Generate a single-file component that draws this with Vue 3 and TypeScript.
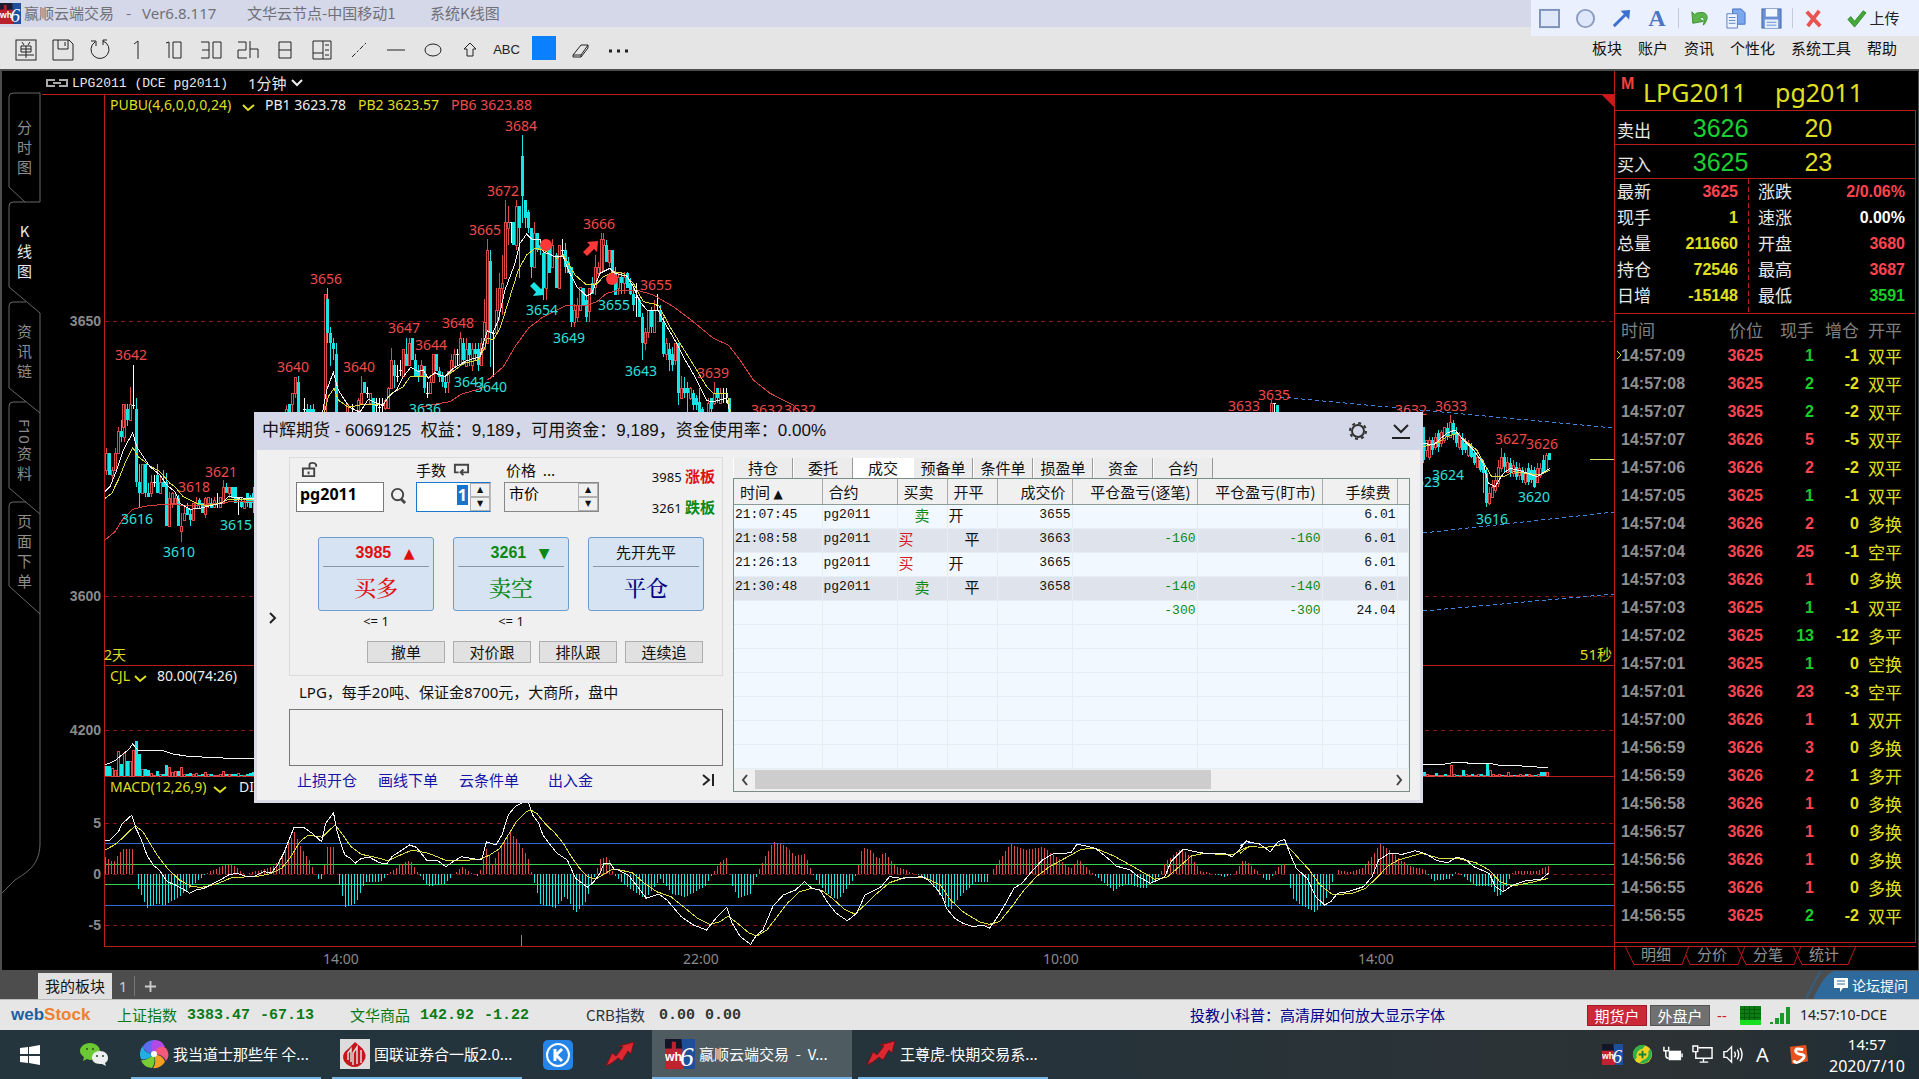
<script setup lang="ts">
type Kind = 'r' | 'c' | 'w'
interface Candle { x: number; high: number; top: number; bottom: number; low: number; kind: Kind }
interface Mark { x: number; y: number; text: string; tone: 'up' | 'down' }
interface Bar { x: number; h: number; kind: Kind }

// Each record: offset, high, body top, body bottom, low, kind. Offsets are thirds of a pixel.
function candles(x0: number, y0: number, src: string): Candle[] {
  return src.trim().split(';').filter(Boolean).map(rec => {
    const p = rec.trim().split(' ')
    const n = p.slice(0, 5).map(Number)
    const y = (v: number) => Math.round(y0 + v / 3)
    return { x: Math.round(x0 + n[0] / 3) - 1, high: y(n[1]), top: y(n[2]), bottom: y(n[3]), low: y(n[4]), kind: p[5] as Kind }
  })
}

// Turns "x,y x,y" samples into polyline points at an origin, with a given horizontal density.
function trace(x0: number, y0: number, density: number, src: string): string {
  return src.trim().split(/\s+/).map(pair => {
    const [x, y] = pair.split(',').map(Number)
    return `${Math.round((x0 + x / density) * 10) / 10},${Math.round((y0 + y / 3) * 10) / 10}`
  }).join(' ')
}

const bars: Candle[] = [
  ...candles(0, 340, `318 325 340 390 405 r;327 340 340 405 405 c;335 380 390 405 425 r;344 325 340 390 390 r;353 260 272 340 340 r;362 240 272 290 305 c;371 192 192 290 305 r;380 192 207 240 258 c;389 140 192 240 240 r;398 75 195 195 207 w;407 175 207 425 440 c;416 372 425 458 500 c;425 372 372 458 458 r;434 372 372 458 470 c;443 430 458 472 472 c;452 405 425 458 470 r;461 405 425 425 440 w;470 372 405 458 458 c;479 405 425 458 458 r;488 390 425 440 440 c;497 400 425 557 557 c;506 455 475 557 557 r;515 455 458 490 505 r;524 460 475 490 490 r;533 465 475 557 557 c;542 520 557 572 605 r;551 500 520 540 540 r;560 490 505 525 525 c;569 510 522 540 557 c;578 490 490 540 540 r;587 470 490 505 505 r;596 475 480 495 505 c;605 490 490 520 520 c;614 472 475 522 535 r;623 472 472 490 505 r;632 475 490 505 505 c;641 470 480 500 500 r;650 458 490 490 505 w;659 472 472 500 505 r;668 420 440 490 490 r;677 430 440 458 458 c;686 440 440 458 475 r;695 440 440 475 475 c;704 440 440 490 490 c;713 470 475 475 525 w;722 472 485 500 505 c;731 475 485 505 505 r;740 458 458 490 500 c;749 465 472 505 505 c;758 440 460 490 520 c`),
  ...candles(90, 120, `99 853 853 920 920 r;587 855 868 890 890 r;596 853 853 890 890 c;605 820 820 853 890 r;614 770 770 820 835 r;623 768 787 890 890 c;641 835 868 868 890 w;650 853 868 890 890 c;659 855 868 890 890 c;668 853 868 890 890 c;704 523 523 890 890 r;712 505 538 640 670 c;721 622 640 670 738 c;730 655 670 688 720 c;739 670 703 890 890 c;770 850 853 890 890 r;785 853 865 865 880 w;803 835 840 870 890 r;812 768 820 850 850 r;821 787 787 820 820 c;830 800 820 820 835 w;839 820 820 850 855 r;848 835 835 890 890 c;857 835 855 855 880 w;866 835 860 860 880 w;875 835 855 855 880 w;884 835 840 865 870 r;893 800 803 865 868 r;902 685 720 803 803 r;911 720 735 768 803 c;920 735 768 768 785 w;929 720 750 750 768 w;938 688 688 768 768 r;947 655 703 738 738 c;956 655 670 735 735 r;965 655 655 720 720 c;974 703 720 768 768 c;983 735 750 770 785 c;992 720 735 765 765 r;1001 738 738 803 820 c;1010 787 820 820 835 w;1019 768 787 820 820 r;1028 703 703 787 787 r;1037 703 703 753 753 c;1046 740 753 770 785 c;1055 755 765 787 800 c;1064 770 787 803 820 c;1073 753 753 787 820 r;1082 703 720 753 753 r;1091 688 703 738 738 r;1100 688 703 703 735 w;1109 635 655 735 735 r;1118 655 670 720 735 c;1127 655 688 738 738 r;1136 670 670 705 738 c;1145 670 688 735 753 r;1154 670 688 703 720 c;1163 670 688 735 753 c;1172 655 670 735 735 r;1181 538 605 688 688 r;1190 357 390 670 670 r;1199 390 423 640 740 c`),
  ...candles(440, 120, `158 635 640 640 770 w;167 505 570 635 635 r;176 458 505 570 600 r;185 405 490 505 585 r;194 240 307 475 475 r;203 258 307 325 375 r;212 307 307 307 370 w;220 307 307 375 375 c;229 240 258 375 390 r;238 258 258 325 475 c;247 45 108 227 310 c;256 240 240 293 325 c;265 270 275 325 340 c;274 325 325 440 475 c;283 307 340 440 440 r;292 340 340 390 395 c;301 360 375 390 405 c;310 390 400 505 540 c;319 390 390 505 540 r;328 375 375 458 458 c;337 357 375 440 440 r;347 400 405 505 505 c;356 375 375 505 505 r;365 357 390 390 405 w;374 370 390 440 460 c;383 410 425 458 458 c;392 440 440 605 622 c;401 552 570 605 622 r;410 535 555 590 605 r;419 500 500 570 570 r;428 505 505 555 555 c;437 530 540 590 605 c;446 505 505 572 605 r;455 470 490 522 522 c;464 405 440 500 525 r;473 425 440 460 470 r;482 340 357 455 455 r;490 340 357 375 455 r;499 360 375 425 425 c;508 390 390 425 440 r;517 390 390 455 490 c;526 440 455 525 525 c;535 460 470 505 525 r;544 455 470 490 522 c;553 455 470 490 522 r;562 455 460 505 505 c;571 475 490 522 525 c;580 500 522 555 572 c;589 490 530 530 590 w;598 535 540 590 590 c;607 580 590 670 720 c;616 625 635 670 690 r;625 570 570 635 655 r;634 560 570 622 640 c;643 540 570 635 640 r;652 522 555 555 572 w;661 555 570 605 605 c;670 590 605 703 710 c;679 655 670 703 720 r;688 670 688 720 753 c;697 680 703 735 753 c;706 670 670 720 735 r;715 670 670 820 855 c;724 768 805 835 835 r;733 770 803 820 835 c;742 785 803 820 880 c;751 800 803 835 840 r;760 810 820 855 870 c;769 825 835 855 870 c;778 803 845 890 890 c;787 860 868 890 890 c;805 835 850 890 890 r;814 835 835 868 880 c;823 787 820 850 855 r;832 803 803 835 850 c;841 805 820 850 850 r;850 803 820 820 850 w;859 803 820 820 850 w;868 835 835 890 890 c`),
  ...candles(1240, 340, `93 180 190 225 225 r;102 190 190 225 225 w;111 195 195 225 225 c;550 260 260 360 370 c;559 300 300 330 350 r;568 290 300 350 360 r;577 290 300 330 345 c;586 280 290 320 330 r;595 270 280 320 335 c;604 270 275 310 320 r;613 260 260 300 310 r;622 250 265 290 300 c;631 225 245 290 290 r;640 240 250 285 300 c;649 260 275 310 320 c;658 275 285 320 330 r;667 280 300 330 345 c;676 295 310 330 340 c;685 300 315 345 350 r;694 310 320 350 355 c;703 330 340 370 375 c;712 340 350 380 385 r;721 350 360 390 395 c;730 360 370 400 460 c;739 380 400 490 500 c;748 440 460 490 495 r;757 420 440 470 475 r;766 400 420 450 460 r;775 360 380 430 440 r;784 325 350 385 395 r;793 340 350 380 400 c;802 350 365 395 400 r;811 355 370 395 410 c;820 360 375 400 410 r;829 365 380 410 420 c;838 370 385 405 420 r;847 380 390 420 430 c;856 385 395 425 435 r;865 370 385 425 435 c;874 375 390 420 430 c;883 380 390 440 445 c;892 370 385 425 430 r;901 370 385 405 415 r;910 345 360 395 400 c;919 340 345 390 390 r;928 340 340 360 360 c`)
]

const whiteLines = [
  trace(0, 340, 3, '315,455 330,440 350,390 370,330 398,278 410,320 430,350 450,380 480,405 500,435 525,455 540,490 570,508 600,505 640,495 665,490 685,470 740,475 762,475'),
  trace(90, 120, 3, '695,890 710,810 730,757 745,810 770,850 785,866 810,876 835,838 860,850 880,855 895,830 920,810 940,770 962,742 985,755 1000,750 1015,775 1035,758 1050,765 1065,770 1090,745 1130,722 1170,710 1180,670 1192,632'),
  trace(440, 120, 3, '142,632 158,640 175,600 195,510 225,430 240,370 260,342 275,358 300,358 310,395 345,410 370,410 385,450 410,500 440,528 455,520 480,460 510,445 525,460 560,468 580,500 600,545 620,570 655,572 675,610 710,670 730,710 770,780 800,842 820,845 860,835 872,890'),
  trace(1240, 340, 3, '550,310 580,315 620,280 645,270 670,300 700,330 730,370 745,430 765,440 790,400 810,385 850,395 890,410 930,385'),
  trace(0, 760, 2.45, '257,242 270,240 290,215 300,190 310,180 323,165 333,205 345,235 360,285 375,315 390,330 410,365 430,375 445,385 465,400 480,390 500,385 520,372 540,360 560,345 580,340 600,348 625,348 645,335 665,338 680,315 695,280 708,240 720,203 745,203 765,220 788,245 798,190 817,158 825,210 835,250 845,285 858,295 870,310 885,295 905,292 930,308 948,312 960,290 985,270 1003,255 1020,262 1045,300 1070,300 1092,320 1110,305 1130,290 1180,300 1192,245 1215,255 1230,225 1245,165 1262,140 1280,128 1295,128 1305,165 1320,190 1330,225 1345,250 1365,280 1390,300 1410,355 1440,382 1455,365 1470,340 1480,310 1495,310 1505,328 1519,331'),
  trace(620, 780, 2.45, '0,273 20,285 40,315 65,355 95,342 115,360 150,410 180,435 212,450 235,415 262,382 275,430 295,470 320,493 335,465 350,450 375,378 400,345 430,330 452,305 470,325 490,330 510,370 530,400 557,422 580,400 600,345 640,320 660,290 690,295 740,290 755,300 775,325 790,350 800,385 820,415 840,430 865,440 890,435 905,445 925,410 945,370 965,325 985,310 1005,280 1035,240 1060,222 1105,218 1120,192 1165,205 1200,240 1215,258 1250,270 1270,290 1300,310 1335,290 1350,245 1380,207 1410,215 1440,222 1480,220 1500,230 1515,212 1535,183 1555,190'),
  trace(1240, 640, 2.309, '0,618 15,605 45,612 70,635 88,605 103,598 115,640 130,685 155,715 175,770 195,795 210,785 225,760 250,755 285,740 305,710 320,660 345,640 375,643 405,632 430,642 455,662 480,668 500,652 520,658 540,680 575,700 590,740 608,755 630,735 660,722 695,718 712,700'),
  trace(0, 340, 3, '315,1275 345,1262 365,1245 385,1230 398,1212 415,1232 490,1232 520,1242 570,1250 640,1252 700,1256 762,1256'),
  trace(1240, 640, 2.309, '423,373 470,373 490,368 510,366 530,370 575,370 600,376 650,378 712,383')
]
const yellowLines = [
  trace(0, 340, 3, '315,475 335,460 355,420 375,370 398,322 415,350 450,378 480,395 510,430 525,440 550,470 590,490 620,497 660,490 685,478 762,480'),
  trace(90, 120, 3, '700,890 715,830 732,805 745,840 775,862 810,855 880,852 905,820 940,800 960,770 1000,768 1015,772 1035,760 1065,770 1095,750 1120,730 1165,720 1185,680 1192,655'),
  trace(440, 120, 3, '142,655 160,660 180,625 210,530 235,450 260,405 285,385 310,390 330,402 350,415 370,405 385,430 405,465 440,495 470,492 490,470 520,455 550,460 580,490 610,545 655,555 690,620 720,670 770,750 800,800 820,820 862,822 874,890'),
  trace(1240, 340, 3, '550,320 590,310 620,290 650,280 680,305 710,330 735,375 755,410 790,410 820,395 860,400 900,405 930,390'),
  trace(0, 760, 2.45, '257,270 280,255 300,235 315,215 332,198 350,215 365,245 385,285 410,325 440,360 470,380 495,382 530,372 570,352 625,350 660,342 690,325 710,295 735,245 755,225 790,232 805,212 822,195 840,225 860,260 885,283 920,292 950,302 985,283 1010,270 1050,280 1090,300 1120,303 1175,298 1200,285 1225,265 1245,225 1265,185 1290,155 1300,150 1315,160 1335,190 1360,220 1380,250 1400,290 1420,325 1440,350 1460,357 1480,342 1500,328 1519,330'),
  trace(620, 780, 2.45, '0,270 30,278 60,310 90,335 125,350 160,385 190,415 220,433 245,425 265,408 290,432 315,458 335,468 360,450 385,410 410,370 440,335 470,325 495,332 520,355 550,388 575,402 600,375 625,345 660,308 700,292 745,292 785,315 810,360 840,395 880,425 905,433 930,425 960,380 990,330 1020,290 1050,262 1090,235 1130,208 1165,205 1210,228 1260,262 1310,298 1340,292 1370,260 1400,228 1430,220 1500,225 1530,205 1550,198'),
  trace(1240, 640, 2.309, '0,640 20,620 60,622 105,612 125,640 160,690 185,735 215,765 260,760 290,745 315,715 340,680 365,660 420,640 460,655 500,655 545,668 575,690 600,725 630,738 680,725 712,715')
]
const redLines = [
  trace(0, 340, 3, '315,600 345,575 370,535 398,508 440,498 500,492 560,497 620,494 690,485 762,483'),
  trace(90, 120, 3, '990,862 1050,850 1080,845 1115,822 1150,812 1190,800'),
  trace(440, 120, 3, '140,780 150,775 190,740 225,680 265,625 310,590 340,575 380,555 440,555 470,545 500,520 530,512 590,510 640,525 700,560 760,605 820,655 865,675 900,720 940,780 990,820 1060,855 1080,876')
]

const marks: Mark[] = [
  ...([[521, 126, 3684], [503, 191, 3672], [485, 230, 3665], [326, 279, 3656], [131, 355, 3642], [404, 328, 3647], [458, 323, 3648], [431, 345, 3644], [599, 224, 3666], [656, 285, 3655], [713, 373, 3639], [293, 367, 3640], [359, 367, 3640], [767, 410, 3632], [800, 410, 3632], [194, 487, 3618], [221, 472, 3621], [1244, 406, 3633], [1274, 395, 3635], [1411, 410, 3632], [1451, 406, 3633], [1511, 439, 3627], [1542, 444, 3626]] as number[][])
    .map(([x, y, v]): Mark => ({ x, y, text: String(v), tone: 'up' })),
  ...([[542, 310, 3654], [614, 305, 3655], [569, 338, 3649], [641, 371, 3643], [470, 382, 3641], [491, 387, 3640], [425, 409, 3636], [137, 519, 3616], [236, 525, 3615], [179, 552, 3610], [1424, 482, 3623], [1448, 475, 3624], [1534, 497, 3620], [1492, 519, 3616]] as number[][])
    .map(([x, y, v]): Mark => ({ x, y, text: String(v), tone: 'down' }))
]

const momentum: [number, number][] = [[105, 17], [113, 12], [122, 25], [132, 25], [135, 0], [138, -15], [147, -34], [155, -30], [165, -31], [180, -22], [196, -8], [205, 0], [215, 5], [225, 9], [232, 9], [245, 0], [260, 4], [275, 9], [285, 25], [294, 42], [300, 28], [310, 12], [315, 0], [320, -8], [323, 0], [326, 27], [333, 27], [336, 0], [345, -33], [355, -30], [365, -8], [380, -8], [388, 0], [398, 8], [410, 14], [418, 0], [428, -12], [445, -10], [453, 0], [462, 7], [478, -3], [486, 25], [492, 10], [502, 30], [510, 42], [520, 30], [528, 15], [532, -2], [540, -30], [555, -34], [565, -22], [575, -39], [585, -28], [595, 0], [600, 15], [608, 17], [613, 0], [625, -12], [645, -25], [660, -5], [672, -20], [685, -23], [705, -12], [712, 0], [720, 12], [727, 17], [730, -8], [738, -24], [750, -20], [757, 0], [765, 18], [773, 32], [785, 28], [795, 18], [805, 20], [812, 0], [825, -18], [838, -26], [850, -10], [856, 0], [862, 27], [870, 24], [878, 15], [884, 22], [895, 8], [915, 0], [925, -3], [935, -15], [950, -36], [960, -22], [975, -8], [988, -8], [990, 0], [998, 12], [1010, 30], [1025, 24], [1042, 27], [1055, 18], [1070, 5], [1078, 15], [1090, 3], [1095, -2], [1113, -17], [1125, -10], [1145, -15], [1158, -3], [1165, 12], [1180, 25], [1190, 18], [1200, 3], [1225, -3], [1234, 0], [1243, 15], [1258, 2], [1265, -6], [1270, -6], [1275, 3], [1281, 10], [1285, 10], [1287, 0], [1292, -24], [1302, -32], [1315, -38], [1325, -27], [1333, -5], [1337, 4], [1350, 2], [1362, 6], [1370, 15], [1380, 30], [1388, 25], [1400, 14], [1410, 8], [1425, 4], [1432, -7], [1450, -5], [1455, 2], [1460, 0], [1475, -12], [1490, -12], [1498, -24], [1505, -14], [1513, 3], [1535, 3], [1549, 8]]
const histogram: Bar[] = []
for (let x = 105, k = 0; x <= 1549; x += 3) {
  while (k < momentum.length - 2 && momentum[k + 1][0] < x) k++
  const [xa, va] = momentum[k]
  const [xb, vb] = momentum[k + 1]
  const v = Math.round(va + ((vb - va) * (x - xa)) / (xb - xa))
  histogram.push({ x, h: Math.abs(v), kind: v >= 0 ? 'r' : 'c' })
}

const volume = (x0: number, src: string): Bar[] => src.split(' ').map((s, i) => ({ x: x0 + i * 3, h: parseInt(s), kind: s.slice(-1) as Kind }))
const volumes: Bar[] = [
  ...volume(105, '10c 10c 8r 6r 25r 12c 23r 15c 15r 26r 35c 22c 7r 7c 6c 3r 1r 5c 2r 2c 11c 9r 4r 5r 5c 9r 2r 2c 3c 2r 3r 1c 2c 4r 2r 2c 1r 1r 2r 5r 2c 2r 2c 2c 3r 1c 1r 2c 3c 4c'),
  ...volume(1423, '4c 2r 1r 1r 3c 1r 1r 2c 1r 11r 2r 1c 1r 6c 2r 1r 2c 1r 2r 2c 1r 12c 6r 2r 1r 2r 1c 1r 4r 1r 1c 1r 2r 1r 2c 2r 1r 1c 2r 4c 4c 4r')
]

interface Deal { time: string; side: string; oc: string; price: string; pl: string; fee: string }
const deals: Deal[] = [
  { time: '21:07:45', side: '卖', oc: '开', price: '3655', pl: '', fee: '6.01' },
  { time: '21:08:58', side: '买', oc: '平', price: '3663', pl: '-160', fee: '6.01' },
  { time: '21:26:13', side: '买', oc: '开', price: '3665', pl: '', fee: '6.01' },
  { time: '21:30:48', side: '卖', oc: '平', price: '3658', pl: '-140', fee: '6.01' }
]
const dealTabs = ['持仓', '委托', '成交', '预备单', '条件单', '损盈单', '资金', '合约']

const ticks = `14:57:09 3625 g1 -1 双平|14:57:08 3625 g2 -2 双平|14:57:07 3625 g2 -2 双平|14:57:07 3626 r5 -5 双平|14:57:06 3626 r2 -2 双平|14:57:05 3625 g1 -1 双平|14:57:04 3626 r2 0 多换|14:57:04 3626 r25 -1 空平|14:57:03 3626 r1 0 多换|14:57:03 3625 g1 -1 双平|14:57:02 3625 g13 -12 多平|14:57:01 3625 g1 0 空换|14:57:01 3626 r23 -3 空平|14:57:00 3626 r1 1 双开|14:56:59 3626 r3 0 多换|14:56:59 3626 r2 1 多开|14:56:58 3626 r1 0 多换|14:56:57 3626 r1 0 多换|14:56:56 3626 r1 0 多换|14:56:55 3626 r1 0 多换|14:56:55 3625 g2 -2 双平`
  .split('|').map(line => {
    const [time, price, lots, delta, kind] = line.split(' ')
    return { time, price, up: lots[0] === 'r', lots: lots.slice(1), delta, kind }
  })

const quotes = [
  ['最新', '3625', 'red', '涨跌', '2/0.06%', 'red'],
  ['现手', '1', 'yellow', '速涨', '0.00%', 'white'],
  ['总量', '211660', 'yellow', '开盘', '3680', 'red'],
  ['持仓', '72546', 'yellow', '最高', '3687', 'red'],
  ['日增', '-15148', 'yellow', '最低', '3591', 'green']
]
const menus = ['板块', '账户', '资讯', '个性化', '系统工具', '帮助']
const sideTabs = [['分', '时', '图'], ['K', '线', '图'], ['资', '讯', '链'], ['F10', '资', '料'], ['页', '面', '下', '单']]
</script>

<template>
  <div class="app">
    <header class="titlebar">
      <svg class="wh-small" viewBox="0 0 22 22"><rect width="22" height="22" fill="#1c1c30" /><path d="M4 2h3v20H4z" fill="#b8202c" /><rect y="7" width="14" height="15" fill="#b8202c" /><path d="M13 0h9v22h-8z" fill="#1e4f9c" /><text x="0" y="16" class="wh-t">wh</text><text x="11" y="20" class="six-t">6</text></svg>
      <span class="t-name">赢顺云端交易</span><span class="t-dash">-</span><span class="t-ver">Ver6.8.117</span><span class="t-node">文华云节点-中国移动1</span><span>系统K线图</span>
    </header>

    <div class="toolbar">
      <div class="tools">
        <button aria-label="下单"><svg viewBox="0 0 22 22"><rect x="1" y="1" width="20" height="20" /><path d="M7 3l2 3M15 3l-2 3M6 7h10v6H6zM6 10h10M11 7v12M3 16h16" /></svg></button>
        <button aria-label="保存"><svg viewBox="0 0 22 22"><path d="M1 1h16l4 4v16H1zM6 1v9h10V1M13 3v4" /></svg></button>
        <button aria-label="刷新"><svg viewBox="0 0 22 22"><path d="M6 3a9 9 0 1 0 8-1M2 2h5v5M14 6V1h4" /></svg></button>
        <button aria-label="1分钟"><svg viewBox="0 0 22 22"><path d="M8 5l4-3v18" /></svg></button>
        <button aria-label="10分钟"><svg viewBox="0 0 22 22"><path d="M3 4l3-1v16M10 3h8v16h-8z" /></svg></button>
        <button aria-label="30分钟"><svg viewBox="0 0 22 22"><path d="M1 3h8v16H1M2 11h7M13 3h8v16h-8z" /></svg></button>
        <button aria-label="2小时"><svg viewBox="0 0 22 22"><path d="M1 3h8v8H1v8h9M13 2v17M13 10h8v9" /></svg></button>
        <button aria-label="日线"><svg viewBox="0 0 22 22"><path d="M5 3h12v16H5zM5 11h12" /></svg></button>
        <button aria-label="布局"><svg viewBox="0 0 22 22"><path d="M2 2h18v18H2zM12 2v18M2 14h10M14 6h4M14 11h4M14 16h4" /></svg></button>
        <button aria-label="画线"><svg viewBox="0 0 22 22"><path d="M4 18L18 4" stroke-dasharray="5 2 2 2" /></svg></button>
        <button aria-label="水平线"><svg viewBox="0 0 22 22"><path d="M2 11h18" /></svg></button>
        <button aria-label="椭圆"><svg viewBox="0 0 22 22"><ellipse cx="11" cy="11" rx="8" ry="6" /></svg></button>
        <button aria-label="箭头"><svg viewBox="0 0 22 22"><path d="M11 4l6 6h-3v7H8v-7H5z" /></svg></button>
        <button class="abc">ABC</button>
        <button aria-label="颜色"><i class="swatch"></i></button>
        <button aria-label="橡皮"><svg viewBox="0 0 22 22"><path d="M3 16l8-10h7l-7 10zM3 16v2h8v-2M11 18l7-9V6" /></svg></button>
        <button class="more" aria-label="更多"><svg viewBox="0 0 22 22"><path d="M2 12h3M10 12h3M18 12h3" stroke-width="3" /></svg></button>
      </div>
      <nav class="menus"><a v-for="m in menus" :key="m" href="#">{{ m }}</a></nav>
    </div>

    <div class="snip">
      <button aria-label="矩形"><svg viewBox="0 0 22 22"><rect x="1" y="2" width="20" height="18" fill="#dfe8fa" stroke="#7c92ba" stroke-width="2" /></svg></button>
      <button aria-label="圆形"><svg viewBox="0 0 22 22"><circle cx="11" cy="11" r="9" fill="#dfe8fa" stroke="#8c9cc0" stroke-width="2" /></svg></button>
      <button aria-label="箭头"><svg viewBox="0 0 22 22"><path d="M3 19L15 7" stroke="#3a70d0" stroke-width="3" fill="none" /><path d="M10 3l10-1-1 10z" fill="#3a70d0" /></svg></button>
      <button class="letter">A</button>
      <i class="sep"></i>
      <button aria-label="撤销"><svg viewBox="0 0 22 22"><path d="M3 4l1 12 11-2-4-3c4-3 6 0 4 7 6-6 6-15-5-13-2 0-3 1-4 2z" fill="#5cb54a" stroke="#3c8c32" /></svg></button>
      <button aria-label="复制"><svg viewBox="0 0 22 22"><path d="M8 1h9l4 4v12H8z" fill="#7ba8ec" stroke="#3f70c0" /><path d="M2 6h11v15H2z" fill="#eef4ff" stroke="#5a7fbe" /><path d="M4 10h7M4 13h7M4 16h7" stroke="#5a7fbe" /></svg></button>
      <button aria-label="保存"><svg viewBox="0 0 22 22"><rect x="1" y="1" width="20" height="20" fill="#6a8fd4" stroke="#4168ac" /><rect x="5" y="1" width="12" height="8" fill="#f3f7ff" /><rect x="4" y="12" width="14" height="9" fill="#e4edfc" /><path d="M6 15h10M6 18h10" stroke="#6a8fd4" /></svg></button>
      <i class="sep"></i>
      <button aria-label="取消"><svg viewBox="0 0 22 22"><path d="M4 4l14 15M17 3L5 19" stroke="#e85450" stroke-width="4" /></svg></button>
      <button class="upload"><svg viewBox="0 0 22 22"><path d="M2 12l3-3 4 5L18 3l3 2L9 20z" fill="#46a83a" stroke="#2f8a28" /></svg>上传</button>
    </div>

    <main class="main">
      <nav class="side">
        <svg class="side-lines" viewBox="0 71 42 899">
          <path d="M25 202L9 187V97q0-4 4-4h27v109M40 202H13q-4 0-4 4v81l31 26M26 302H13q-4 0-4 4v82l31 25M26 402H13q-4 0-4 4v82l31 26M26 502H13q-4 0-4 4v80l31 28M40 313V845C39 866 27 872 15 880L2 893" />
        </svg>
        <button v-for="(t, i) in sideTabs" :key="i" :class="{ on: i === 1 }"><span v-for="c in t" :key="c" :class="{ turned: c.length > 1 }">{{ c }}</span></button>
      </nav>

      <section class="chart">
        <svg class="canvas">
          <g transform="translate(-42 -71)">
            <g class="px">
              <path class="dash" d="M105 321.5H3000M105 596.5H3000M105 730.5H3000M105 823.5H3000M105 874.5H3000M105 925.5H3000" />
              <path class="frame" d="M42 94.5H3000M104.5 94V946M104 665.5H3000M104 776.5H3000M104 946.5H3000" />
              <path class="blue" d="M105 843.5H3000M105 905.5H3000" />
              <path class="lime" d="M105 864.5H3000M105 884.5H3000" />
              <path class="tick" d="M521.5 935V946" />
              <g v-for="(b, i) in histogram" :key="'h' + i">
                <rect v-if="b.h" :class="b.kind" :x="b.x" :y="b.kind === 'r' ? 874 - b.h : 874" width="1" :height="b.h" />
              </g>
              <g v-for="(b, i) in volumes" :key="'v' + i">
                <rect v-if="b.kind === 'c'" class="c" :x="b.x" :y="776 - b.h" width="3" :height="b.h" />
                <rect v-else class="hollow" :x="b.x + 0.5" :y="776.5 - b.h" width="2" :height="b.h" />
              </g>
              <g v-for="(b, i) in bars" :key="'k' + i">
                <rect :class="b.kind" :x="b.x + 1" :y="b.high" width="1" :height="b.low - b.high" />
                <rect v-if="b.kind === 'c'" class="c" :x="b.x" :y="b.top" width="3" :height="Math.max(1, b.bottom - b.top)" />
                <rect v-else-if="b.kind === 'w'" class="w" :x="b.x" :y="b.top" width="3" height="1" />
                <rect v-else class="hollow" :x="b.x + 0.5" :y="b.top + 0.5" width="2" :height="Math.max(1, b.bottom - b.top)" />
              </g>
              <polyline v-for="(p, i) in redLines" :key="'r' + i" :points="p" class="l-red" />
              <polyline v-for="(p, i) in yellowLines" :key="'y' + i" :points="p" class="l-yellow" />
              <polyline v-for="(p, i) in whiteLines" :key="'w' + i" :points="p" class="l-white" />
              <path class="trend" d="M1280 397L1614 428M1423 533L1614 512M1423 611L1614 594" />
              <path class="last" d="M1590 459.5H1614" />
            </g>
            <circle cx="546" cy="245" r="6" class="dot" /><circle cx="612" cy="279" r="6" class="dot" />
            <path d="M583 252l7-7-3-3 11-1-1 11-3-3-7 7z" class="dot" />
            <path d="M534 282l7 7 3-3 0 9-11 1 3-4-6-6z" class="c" />
            <text v-for="(m, i) in marks" :key="'m' + i" :x="m.x" :y="m.y + 5" :class="['mark', m.tone]">{{ m.text }}</text>
            <g class="axis">
              <text x="101" y="326">3650</text><text x="101" y="601">3600</text><text x="101" y="735">4200</text>
              <text x="101" y="828">5</text><text x="101" y="879">0</text><text x="101" y="930">-5</text>
            </g>
            <g class="times"><text x="341" y="964">14:00</text><text x="701" y="964">22:00</text><text x="1061" y="964">10:00</text><text x="1376" y="964">14:00</text></g>
            <g class="legend">
              <text x="110" y="110" class="ye">PUBU(4,6,0,0,0,24)</text><path d="M243 105l5 5 6-5" />
              <text x="265" y="110" class="wt">PB1 3623.78</text><text x="358" y="110" class="ye">PB2 3623.57</text><text x="451" y="110" class="rd">PB6 3623.88</text>
              <text x="104" y="660" class="ye">2天</text>
              <text x="110" y="681" class="ye">CJL</text><path d="M135 676l5 5 6-5" /><text x="157" y="681" class="wt">80.00(74:26)</text>
              <text x="110" y="792" class="ye">MACD(12,26,9)</text><path d="M214 787l6 5 6-5" /><text x="239" y="792" class="wt">DIFF</text>
            </g>
            <g class="link"><path d="M55 80h-8v6h8M59 80h8v6h-8M53 83h8" /></g>
          </g>
          <svg x="100%" class="anchor"><path d="M-12 24H0V36z" fill="#d01818" /><text x="-2" y="589" class="secs">51秒</text></svg>
        </svg>
        <div class="chart-head"><span class="mono">LPG2011 (DCE pg2011)</span><button class="period">1分钟<svg viewBox="0 0 12 8"><path d="M1 1l5 5 5-5" /></svg></button></div>
      </section>

      <aside class="panel">
        <div class="symbol"><b>M</b><span>LPG2011</span><span>pg2011</span></div>
        <div class="book"><span>卖出</span><em>3626</em><i>20</i></div>
        <div class="book"><span>买入</span><em>3625</em><i>23</i></div>
        <div class="quotes">
          <div v-for="q in quotes" :key="q[0]" class="quote">
            <span>{{ q[0] }}</span><b :class="q[2]">{{ q[1] }}</b><span class="second">{{ q[3] }}</span><b :class="q[5]">{{ q[4] }}</b>
          </div>
        </div>
        <table class="ticks">
          <colgroup><col class="k1" /><col class="k2" /><col class="k3" /><col class="k4" /><col /></colgroup>
          <thead><tr><th class="lft">时间</th><th>价位</th><th>现手</th><th>增仓</th><th class="kind">开平</th></tr></thead>
          <tbody>
            <tr v-for="(t, i) in ticks" :key="i">
              <td class="lft">{{ t.time }}</td><td class="red">{{ t.price }}</td><td :class="t.up ? 'red' : 'green'">{{ t.lots }}</td><td class="yellow">{{ t.delta }}</td><td class="kind">{{ t.kind }}</td>
            </tr>
          </tbody>
        </table>
        <svg class="pointer" viewBox="0 0 6 10"><path d="M1 1l4 4-4 4" /></svg>
        <nav class="ptabs">
          <svg viewBox="0 0 250 20"><path d="M0 .5H301M10 0L19 18.500H67L74 0M71 9L75 18.500H123L130 0M122 0L131 18.500H179L186 0M178 0L187 18.500H233L241 0" /></svg>
          <button>明细</button><button>分价</button><button>分笔</button><button>统计</button>
        </nav>
      </aside>

      <section class="dialog">
        <header><h1>中辉期货 - 6069125&nbsp; 权益：9,189，可用资金：9,189，资金使用率：0.00%</h1>
          <button aria-label="设置"><svg viewBox="0 0 20 20"><circle cx="10" cy="10" r="6" fill="none" stroke="#333" stroke-width="2" /><circle cx="10" cy="10" r="8" fill="none" stroke="#333" stroke-width="2" stroke-dasharray="3 3.280" /></svg></button>
          <button aria-label="收起"><svg viewBox="0 0 20 20"><path d="M3 4l7 7 7-7M1 17h18" fill="none" stroke="#222" stroke-width="2" /></svg></button>
        </header>
        <div class="dbody">
          <button class="expand" aria-label="展开"><svg viewBox="0 0 8 12"><path d="M1 1l5 5-5 5" /></svg></button>
          <div class="order">
            <div class="group">
              <div class="fields">
                <div class="field f1">
                  <label for="code" aria-label="合约"><svg viewBox="0 0 18 18"><path d="M2 8h12v8H2zM9 8V4q0-2 3-2t4 2v2M8 11v3" /></svg></label>
                  <div class="line"><input id="code" value="pg2011" /><button aria-label="查找"><svg viewBox="0 0 18 18"><circle cx="8" cy="8" r="6" /><path d="M12 13l4 4" stroke-width="3" /></svg></button></div>
                </div>
                <div class="field f2">
                  <label for="lots">手数<svg viewBox="0 0 18 14"><path d="M6 10H2V2h14v8H9M11 7l-3 3 3 3" /></svg></label>
                  <div class="spin blue-edge"><input id="lots" value="1" class="hid" /><mark>1</mark><span class="arrows"><button aria-label="增加">▲</button><button aria-label="减少">▼</button></span></div>
                </div>
                <div class="field f3">
                  <label for="price">价格 &nbsp;...</label>
                  <div class="spin"><input id="price" value="市价" /><span class="arrows"><button aria-label="上调">▲</button><button aria-label="下调">▼</button></span></div>
                </div>
                <div class="limits"><p>3985 <b class="up">涨板</b></p><p>3261 <b class="dn">跌板</b></p></div>
              </div>
              <div class="trade">
                <div><button class="big up"><span>3985 <i>▲</i></span><strong>买多</strong></button><small>&lt;= 1</small></div>
                <div><button class="big dn"><span>3261 <i>▼</i></span><strong>卖空</strong></button><small>&lt;= 1</small></div>
                <div><button class="big nv"><span class="plain">先开先平</span><strong>平仓</strong></button></div>
              </div>
              <div class="minor"><button>撤单</button><button>对价跟</button><button>排队跟</button><button>连续追</button></div>
            </div>
            <p class="info">LPG，每手20吨、保证金8700元，大商所，盘中</p>
            <textarea aria-label="信息" readonly></textarea>
            <div class="links"><a href="#">止损开仓</a><a href="#">画线下单</a><a href="#">云条件单</a><a href="#" class="cash">出入金</a><button aria-label="展开右侧"><svg viewBox="0 0 14 14"><path d="M2 2l6 5-6 5M12 1v12" /></svg></button></div>
          </div>
          <div class="deals">
            <div class="dtabs"><button v-for="t in dealTabs" :key="t" :class="{ on: t === '成交' }">{{ t }}</button></div>
            <div class="grid">
              <table>
                <colgroup><col class="c1" /><col class="c2" /><col class="c3" /><col class="c3" /><col class="c2" /><col class="c6" /><col class="c6" /><col class="c2" /><col /></colgroup>
                <thead><tr><th class="l">时间 <i>▲</i></th><th class="l">合约</th><th class="l">买卖</th><th class="l">开平</th><th>成交价</th><th>平仓盈亏(逐笔)</th><th>平仓盈亏(盯市)</th><th>手续费</th><th></th></tr></thead>
                <tbody>
                  <tr v-for="d in deals" :key="d.time">
                    <td class="l">{{ d.time }}</td><td class="l">pg2011</td>
                    <td :class="['zh', d.side === '买' ? 'buy' : 'sell']">{{ d.side }}</td>
                    <td :class="['zh', d.oc === '开' ? 'open' : 'close']">{{ d.oc }}</td>
                    <td>{{ d.price }}</td><td class="gr">{{ d.pl }}</td><td class="gr">{{ d.pl }}</td><td>{{ d.fee }}</td><td></td>
                  </tr>
                  <tr class="sum"><td></td><td></td><td></td><td></td><td></td><td class="gr">-300</td><td class="gr">-300</td><td>24.04</td><td></td></tr>
                  <tr v-for="n in 6" :key="n" class="blank"><td v-for="m in 9" :key="m"></td></tr>
                </tbody>
              </table>
              <div class="scroll"><button aria-label="左"><svg viewBox="0 0 8 12"><path d="M6 1L2 6l4 5" /></svg></button><div><i></i></div><button aria-label="右"><svg viewBox="0 0 8 12"><path d="M2 1l4 5-4 5" /></svg></button></div>
            </div>
          </div>
        </div>
      </section>
    </main>

    <div class="boards">
      <button class="mine">我的板块</button><button class="plain1">1</button><button class="plus" aria-label="添加"><svg viewBox="0 0 14 14"><path d="M7 1v12M1 7h12" /></svg></button>
      <a href="#" class="forum"><svg class="slant" viewBox="0 0 118 30" preserveAspectRatio="none"><path d="M12 30Q24 2 34 1H118V30z" fill="#2e6a9c" /><path d="M5 30Q14 10 20 1" stroke="#3c5a70" stroke-width="3" fill="none" /></svg><svg class="chat" viewBox="0 0 14 14"><path d="M0 0h14v10H9l-3 4v-4H0z" fill="#fff" /><path d="M3 3h8M3 6h8" stroke="#2e6a9c" stroke-width="1" /></svg><span>论坛提问</span></a>
    </div>

    <div class="status">
      <div class="brand"><b>web</b><i>Stock</i></div>
      <div class="idx ix1"><span>上证指数</span><b>3383.47</b><b>-67.13</b></div>
      <div class="idx ix2"><span>文华商品</span><b>142.92</b><b>-1.22</b></div>
      <div class="idx dark"><span>CRB指数</span><b class="crb">0.00</b><b>0.00</b></div>
      <a href="#" class="tip">投教小科普：高清屏如何放大显示字体</a>
      <div class="right">
        <button class="fut">期货户</button><button class="ext">外盘户</button><span class="dd">--</span>
        <svg class="meter" viewBox="0 0 21 19"><rect width="21" height="19" fill="#0b7d12" /><rect y="14" width="21" height="5" fill="#18e020" /><path d="M0 3.500H21M0 7.500H21M0 11.500H21M4.500 0V14M9.500 0V14M14.500 0V14" stroke="#055c0a" /></svg>
        <svg class="signal" viewBox="0 0 21 19"><path d="M0 16h3v2H0zM5 12h4v6H5zM10 7h4v11h-4zM16 1h4v17h-4z" fill="#1a9a28" /></svg>
        <span class="clk">14:57:10-DCE</span>
      </div>
    </div>

    <footer class="taskbar">
      <button class="start" aria-label="开始"><svg viewBox="0 0 20 20"><path d="M0 3l8-1v7H0zM9 2l11-2v9H9zM0 11h8v7l-8-1zM9 11h11v9L9 18z" fill="#fff" /></svg></button>
      <button class="wx" aria-label="微信"><svg viewBox="0 0 30 26"><path d="M11 1c6 0 10 4 10 8s-4 9-10 9l-3-1-4 2 1-4C2 13 1 11 1 9c0-4 4-8 10-8z" fill="#6cc832" /><path d="M21 9c5 0 8 3 8 7 0 2-1 4-3 5l1 3-4-2h-2c-5 0-8-3-8-6 0-4 3-7 8-7z" fill="#eceef0" /><g fill="#2a4a20"><circle cx="8" cy="7" r="1" /><circle cx="14" cy="7" r="1" /><circle cx="18" cy="14" r="1" /><circle cx="24" cy="14" r="1" /></g></svg></button>
      <button class="task"><svg viewBox="0 0 30 30"><g stroke="none"><path d="M15 15Q8 8 14 1q9-1 12 7-6-1-11 7z" fill="#b44ae6" /><path d="M15 15Q19 5 27 9q5 7 0 13-3-7-12-7z" fill="#f4587a" /><path d="M15 15q9 1 11 8-5 7-12 6 4-5 1-14z" fill="#f2a024" /><path d="M15 15q2 9-2 14-9-1-11-8 6 1 13-6z" fill="#78cc34" /><path d="M15 15q-7 7-13 5-3-8 2-13 1 8 11 8z" fill="#22b0e4" /><path d="M15 15Q5 14 4 7q4-6 11-6-5 5 0 14z" fill="#5b6cf0" /></g><circle cx="15" cy="15" r="3" fill="#fff" /></svg><span>我当道士那些年 仐...</span></button>
      <button class="task"><svg viewBox="0 0 30 30"><rect width="30" height="30" fill="#dcdcdc" /><path d="M15 3l7 6q6 7 2 13-4 6-9 6-7 0-11-6-3-7 4-12z" fill="#c8141c" /><path d="M13 26V14l4-6v17M8 21v-7l3-4v13M21 24V11" stroke="#dcdcdc" stroke-width="1.500" fill="none" /></svg><span>国联证券合一版2.0...</span></button>
      <button class="solo s1" aria-label="K"><svg viewBox="0 0 30 30"><rect width="30" height="30" rx="5" fill="#2484e8" /><circle cx="15" cy="15" r="11" fill="none" stroke="#fff" stroke-width="2" /><path d="M12 9v12M19 9l-6 6 6 6" stroke="#fff" stroke-width="3" fill="none" /></svg></button>
      <button class="solo s2" aria-label="行情"><svg viewBox="0 0 30 30"><path d="M1 26l6-13 4 3 7-9-4-1L29 2l-3 12-3-3-6 10-4-3-6 5z" fill="#dc2830" stroke="#7c1018" /></svg></button>
      <button class="task active"><svg viewBox="0 0 22 22"><rect width="22" height="22" fill="#15152a" /><path d="M5 2h3v20H5z" fill="#c0222e" /><rect y="7" width="14" height="15" fill="#c0222e" /><path d="M12 0h10v22h-8z" fill="#1e4f9c" /><text x="0" y="16" class="wh-t">wh</text><text x="11" y="20" class="six-t">6</text></svg><span>赢顺云端交易 &nbsp;- &nbsp;V...</span></button>
      <button class="task last-task"><svg viewBox="0 0 30 30"><path d="M1 26l6-13 4 3 7-9-4-1L29 2l-3 12-3-3-6 10-4-3-6 5z" fill="#dc2830" stroke="#7c1018" /></svg><span>王尊虎-快期交易系...</span></button>
      <div class="tray">
        <svg viewBox="0 0 22 22"><rect width="22" height="22" fill="#15152a" /><rect y="7" width="14" height="15" fill="#c0222e" /><path d="M12 0h10v22h-8z" fill="#1e4f9c" /><text x="0" y="16" class="wh-t">wh</text><text x="11" y="20" class="six-t">6</text></svg>
        <svg viewBox="0 0 22 22"><circle cx="11" cy="11" r="10" fill="#f0d020" /><path d="M3 17A10 10 0 0 1 14 1.500L11 5A7 7 0 0 0 5 14z" fill="#2cb04a" /><path d="M19 5A10 10 0 0 1 8 20l3-3a7 7 0 0 0 6-9z" fill="#2cb04a" /><path d="M11 7v8M7 11h8" stroke="#14803a" stroke-width="2" /></svg>
        <svg viewBox="0 0 22 22"><rect x="7" y="7" width="13" height="10" fill="#fff" /><path d="M21 10v4M2 3v4h5V3M4 7v5q0 3 3 3" stroke="#fff" stroke-width="1.500" fill="none" /></svg>
        <svg viewBox="0 0 22 22"><path d="M7 4h14v11H4V8M1 2h5v6H1zM12 15v4M8 19h9" stroke="#fff" stroke-width="1.500" fill="none" /></svg>
        <svg viewBox="0 0 22 22"><path d="M2 8h3l5-5v16l-5-5H2zM13 8q2 3 0 6M16 6q3 5 0 10M19 4q4 7 0 14" stroke="#fff" stroke-width="1.500" fill="none" /></svg>
        <span class="ime">A</span>
        <svg viewBox="0 0 22 22"><path d="M2 3l17-2 2 17-17 3z" fill="#e8501c" /><path d="M16 6q-8-2-8 1t6 4 0 6-8 0" stroke="#fff" stroke-width="3" fill="none" /></svg>
      </div>
      <time><span class="hm">14:57</span><span>2020/7/10</span></time>
    </footer>
  </div>
</template>

<style>
body { margin: 0; background: #000; }
</style>

<style scoped>
.app { position: relative; display: flex; flex-direction: column; min-height: 100vh; overflow: hidden; font-family: "Noto Sans", "Noto Sans CJK SC", sans-serif; font-size: 15px; background: #000; }
* { box-sizing: border-box; }
button { border: 0; padding: 0; margin: 0; background: none; font: inherit; color: inherit; }
a { text-decoration: none; color: inherit; }
p { margin: 0; }
i, em { font-style: normal; }
.app { line-height: 20px; }

.titlebar { height: 27px; background: #d5d8e8; display: flex; align-items: center; padding-bottom: 1px; color: #6f7078; white-space: pre; font-family: "Noto Sans CJK SC", sans-serif; }
.wh-small { width: 21px; height: 21px; margin-right: 3px; }
.wh-t { font: bold 9px "Liberation Sans", sans-serif; fill: #fff; }
.six-t { font: italic 20px "Liberation Serif", serif; fill: #fff; }
.t-name { width: 102px; } .t-dash { width: 16px; } .t-ver { width: 105px; font-family: "Noto Sans", sans-serif; } .t-node { width: 183px; }
.toolbar { height: 44px; background: #e5e5e5; border-bottom: 2px solid #4d4d4d; display: flex; justify-content: space-between; }
.tools { display: flex; align-items: center; padding-left: 7px; padding-top: 3px; }
.tools button { width: 37px; height: 30px; display: flex; align-items: center; justify-content: center; }
.tools svg { width: 22px; height: 22px; fill: none; stroke: #222; stroke-width: 1; shape-rendering: geometricPrecision; }
.tools .abc { font: 13px "Liberation Sans", sans-serif; color: #222; }
.swatch { width: 24px; height: 24px; background: #0a80ff; display: block; margin-bottom: 4px; }
.menus { display: flex; gap: 16px; padding-right: 22px; align-items: flex-end; padding-bottom: 11px; color: #111; font-family: "Noto Sans CJK SC", sans-serif; }

.snip { position: absolute; top: 0; right: 0; width: 388px; height: 36px; background: #eaf0fd; display: flex; align-items: center; }
.snip button { width: 36px; height: 34px; display: flex; align-items: center; justify-content: center; flex: none; }
.snip svg { width: 21px; height: 21px; fill: none; }
.snip .letter { font: bold 24px "Liberation Serif", serif; color: #4a74c4; }
.sep { width: 1px; height: 20px; background: #c2cbdc; margin: 0 2px 0 3px; }
.snip .upload { width: 84px; gap: 2px; font-family: "Noto Sans CJK SC", sans-serif; color: #222; }

.main { position: relative; flex: 1; display: flex; background: #000; border-left: 2px solid #4d4d4d; border-right: 1px solid #4d4d4d; }
.side { position: relative; width: 40px; padding-top: 22px; display: flex; flex-direction: column; }
.side-lines { position: absolute; left: -2px; top: 0; width: 42px; height: 899px; fill: none; stroke: #666; stroke-width: 1; }
.side button { position: relative; height: 100px; padding: 0 0 2px 5px; color: #8c8c8c; display: flex; flex-direction: column; align-items: center; justify-content: center; font-family: "Noto Sans CJK SC", sans-serif; line-height: 20px; }
.side button:nth-of-type(1) { height: 109px; }
.side .on { color: #e8e8e8; }
.turned { writing-mode: vertical-rl; font-family: "Noto Sans", sans-serif; width: 20px; line-height: 20px; }

.chart { position: relative; flex: 1; min-width: 0; overflow: hidden; }
.canvas { display: block; width: 100%; height: 899px; }
.anchor { overflow: visible; }
.px { shape-rendering: crispEdges; fill: none; }
.frame { stroke: #b81c1c; } .dash { stroke: #8a1616; stroke-dasharray: 4 4; }
.blue { stroke: #2a6cd8; } .lime { stroke: #34d450; } .tick { stroke: #888; }
.r { fill: #e04848; } .c { fill: #18e4e4; } .w { fill: #fff; }
.hollow { fill: #000; stroke: #e04848; }
.l-red { stroke: #d84040; } .l-yellow { stroke: #dcdc3c; } .l-white { stroke: #f4f4f4; }
.trend { stroke: #3c84e0; stroke-dasharray: 4 3; } .last { stroke: #e0e060; }
.dot { fill: #ff3838; }
.mark { font-size: 14px; text-anchor: middle; } .up { fill: #f04a4a; } .down { fill: #2ce0dc; }
.axis { font: bold 14px "Liberation Sans", sans-serif; fill: #8a8a8a; text-anchor: end; }
.times { font-size: 14px; fill: #8a8a8a; text-anchor: middle; }
.legend { font-size: 14px; }
.legend path { fill: none; stroke: #e0e020; stroke-width: 2; }
.ye { fill: #dede20; } .wt { fill: #eee; } .rd { fill: #f04a4a; }
.link path { fill: none; stroke: #aaa; stroke-width: 2; }
.secs { font-size: 15px; fill: #dede20; text-anchor: end; }
.chart-head { position: absolute; left: 30px; top: 2px; height: 20px; display: flex; align-items: center; gap: 20px; color: #e8e8e8; }
.mono { font: 13px "Liberation Mono", monospace; }
.period { display: flex; align-items: center; gap: 4px; }
.period svg { width: 12px; height: 8px; fill: none; stroke: #eee; stroke-width: 2; }

.panel { position: relative; width: 304px; border-left: 1px solid #b81c1c; color: #e8e8e8; padding-right: 2px; }
.panel::after { content: ""; position: absolute; right: 2px; top: 39px; height: 832px; width: 1px; background: #b81c1c; }
.symbol { height: 40px; border-bottom: 1px solid #b81c1c; color: #e0e020; font-size: 25px; line-height: 42px; display: flex; }
.symbol b { font: bold 16px "Liberation Sans", sans-serif; color: #f04040; width: 28px; padding: 4px 0 0 6px; }
.symbol span { width: 132px; }
.book { height: 34px; border-bottom: 1px solid #b81c1c; display: flex; font-size: 17px; line-height: 34px; padding-left: 2px; }
.book span { width: 76px; padding-top: 3px; }
.book em, .book i { font: 25px/34px "Liberation Sans", sans-serif; width: 112px; color: #18d030; } .book i { color: #dede20; }
.quotes { height: 135px; border-bottom: 1px solid #b81c1c; background: linear-gradient(#b81c1c 60%, transparent 60%) 133px 0 / 1px 8px repeat-y; }
.quote { height: 26px; display: flex; align-items: center; font-size: 17px; padding: 0 11px 0 2px; }
.quote span { width: 40px; } .quote .second { padding-left: 20px; width: 64px; }
.quote b { font: bold 16px "Liberation Sans", sans-serif; text-align: right; width: 81px; } .quote .second + b { flex: 1; }
.red { color: #ff4450; } .yellow { color: #e0e020; } .white { color: #fff; } .green { color: #18d028; }
.ticks { width: 300px; border-collapse: collapse; table-layout: fixed; font: bold 16px/20px "Liberation Sans", sans-serif; color: #909090; }
.k1 { width: 94px; } .k2 { width: 54px; } .k3 { width: 51px; } .k4 { width: 45px; }
.ticks td, .ticks th { height: 28px; padding: 0; text-align: right; }
.ticks th, .ticks .kind { font: 17px/20px "Noto Sans CJK SC", sans-serif; }
.ticks th { color: #808080; padding-top: 4px; }
.ticks .lft { text-align: left; padding-left: 6px; }
.ticks .kind { text-align: left; padding-left: 9px; } .ticks td.kind { color: #e0e020; }
.pointer { position: absolute; left: 1px; top: 279px; width: 6px; height: 10px; fill: none; stroke: #e0e020; }
.ptabs { position: relative; display: flex; margin-top: 12px; padding: 3px 0 0 13px; border-top: 1px solid #b81c1c; }
.ptabs svg { position: absolute; left: 0; top: 3px; width: 250px; height: 20px; fill: none; stroke: #b81c1c; overflow: visible; }
.ptabs button { position: relative; width: 56px; height: 17px; color: #909090; font-size: 15px; line-height: 17px; }

.dialog { position: absolute; left: 252px; top: 341px; width: 1169px; height: 391px; background: #f0f0f0; border: 3px solid #d8dbe8; border-top: 0; color: #111; display: flex; flex-direction: column; }
.dialog header { height: 38px; flex: none; background: #d4d7e7; display: flex; align-items: center; margin: 0 -3px; padding: 0 12px 0 8px; gap: 23px; }
h1 { margin: 0; font: 17px/24px "Liberation Sans", "Noto Sans CJK SC", sans-serif; flex: 1; white-space: pre; }
.dialog header svg { width: 20px; height: 20px; display: block; }
.dbody { flex: 1; display: flex; padding: 7px 10px 10px 0; min-height: 0; }
.expand { width: 32px; padding-bottom: 12px; } .expand svg { width: 8px; height: 12px; fill: none; stroke: #222; stroke-width: 2; }
.order { width: 434px; }
.group { height: 219px; border: 1px solid #dcdcdc; padding: 1px 6px 0; }
.fields { display: flex; height: 78px; }
.field label { display: flex; align-items: center; height: 21px; gap: 7px; margin-bottom: 2px; font-family: "Noto Sans CJK SC", sans-serif; white-space: pre; }
.field svg { width: 17px; height: 17px; fill: none; stroke: #444; stroke-width: 2; }
.f1 { width: 120px; } .f1 label { padding-left: 5px; } .f2 { width: 88px; } .f3 { width: 95px; } .f3 label { padding-left: 2px; }
.line { display: flex; gap: 6px; align-items: center; }
input { font: 15px "Noto Sans CJK SC", sans-serif; border: 1px solid #7a7a7a; background: #fff; margin: 0; min-width: 0; }
#code { width: 88px; height: 30px; font: bold 16px "Noto Sans", sans-serif; padding: 0 3px 6px; }
.spin { position: relative; height: 30px; border: 1px solid #888; display: flex; background: #f0f0f0; }
.spin input { flex: 1; width: 20px; border: 0; background: none; padding: 0 4px 9px; }
.blue-edge { width: 75px; background: #fff; border: 1px solid #1878d0; border-right-color: #bbb; }
.blue-edge .hid { color: transparent; }
mark { position: absolute; right: 22px; top: 2px; background: #1474d0; color: #fff; font: bold 16px/20px "Noto Sans", sans-serif; padding: 0 1px; }
.arrows { width: 20px; display: flex; flex-direction: column; background: #f0f0f0; }
.arrows button { flex: 1; border: 1px solid #b0b0b0; font-size: 8px; line-height: 10px; font-family: "DejaVu Sans", sans-serif; }
.limits { flex: 1; padding: 7px 1px 0 0; text-align: right; font-size: 13px; white-space: nowrap; } .limits p { height: 31px; line-height: 20px; }
.limits b { font: bold 15px/20px "Noto Sans CJK SC", sans-serif; }
.limits .up, .big.up { color: #e01010; } .limits .dn, .big.dn { color: #0a8a14; } .big.nv { color: #000080; }
.trade { display: flex; gap: 19px; padding-left: 22px; height: 104px; }
.trade > div { width: 116px; text-align: center; flex: none; }
.big { display: flex; flex-direction: column; width: 116px; height: 74px; background: #d6e3f3; border: 1px solid #6c9ccc; border-radius: 3px; padding: 0 4px; align-items: stretch; }
.big span { height: 29px; border-bottom: 1px solid #8a96a4; font: bold 16px/30px "Liberation Sans", sans-serif; white-space: pre; padding-left: 18px; }
.big span i { margin-left: 8px; font: 14px/20px "DejaVu Sans", sans-serif; }
.big .plain { font: 15px/28px "Noto Sans CJK SC", sans-serif; color: #111; padding: 0; }
.big strong { font: 500 22px/40px "Noto Serif CJK SC", "Noto Sans CJK SC", serif; }
small { font-size: 13px; line-height: 20px; display: block; }
.minor { display: flex; gap: 8px; padding-left: 71px; }
.minor button { width: 78px; flex: none; height: 22px; border: 1px solid #adadad; background: #e1e1e1; line-height: 18px; font-family: "Noto Sans CJK SC", sans-serif; }
.info { height: 33px; line-height: 32px; padding-left: 10px; white-space: pre; }
textarea { display: block; width: 434px; height: 57px; border: 1px solid #777; background: #f0f0f0; resize: none; padding: 0; }
.links { display: flex; gap: 21px; padding: 4px 8px 0 8px; color: #1414a8; font-family: "Noto Sans CJK SC", sans-serif; }
.links .cash { margin-left: 8px; } .links button { margin-left: auto; }
.links svg { width: 14px; height: 14px; fill: none; stroke: #222; stroke-width: 2; display: block; }
.deals { flex: 1; margin-left: 10px; display: flex; flex-direction: column; min-width: 0; }
.dtabs { display: flex; height: 22px; padding-top: 1px; }
.dtabs button { width: 60px; border-left: 1px solid #fff; border-right: 1px solid #999; background: #ececec; font: 15px/20px "Noto Sans CJK SC", sans-serif; }
.dtabs .on { background: #fff; border-color: #fff; }
.grid { flex: 1; border: 1px solid #788c88; background: #f2f8ff; display: flex; flex-direction: column; }
.grid table { border-collapse: collapse; table-layout: fixed; width: 100%; font: 13px/20px "Liberation Mono", monospace; }
.c1 { width: 88px; } .c2 { width: 75px; } .c3 { width: 50px; } .c6 { width: 125px; }
.grid th { height: 25px; padding: 2px 6px 0 0; text-align: right; font: 15px/20px "Noto Sans CJK SC", sans-serif; background: #f0f0f0; border-right: 1px solid #aaa; border-bottom: 1px solid #8c9a98; white-space: nowrap; }
.grid th:last-child { border-right: 0; }
.grid th.l { text-align: left; padding: 2px 0 0 6px; } .grid th i { font: 12px/16px "DejaVu Sans", sans-serif; }
.grid td { height: 24px; padding: 0 1px 3px 0; text-align: right; border-right: 1px solid #e6edf6; border-bottom: 1px solid #e6edf6; white-space: nowrap; }
.grid td.l { text-align: left; padding-left: 1px; }
.grid tbody tr:nth-child(2) td, .grid tbody tr:nth-child(4) td { background: #dfe4ec; }
.grid .zh { text-align: left; font: 15px/19px "Noto Sans CJK SC", sans-serif; padding-left: 1px; }
.grid .sell { color: #0a8a14; padding-left: 17px; } .grid .buy { color: #d81820; } .grid .close { padding-left: 17px; } .gr { color: #0a8a14; }
.scroll { margin-top: auto; height: 22px; display: flex; background: #f0f0f0; }
.scroll button { width: 21px; } .scroll svg { width: 8px; height: 12px; fill: none; stroke: #444; stroke-width: 2; }
.scroll div { flex: 1; } .scroll div i { display: block; width: 72%; height: 19px; background: #cdcdcd; margin-top: 1px; }

.boards { height: 30px; background: #4d4d4d; display: flex; align-items: flex-end; border-bottom: 1px solid #bbb; color: #ccc; }
.mine { margin-left: 38px; width: 74px; height: 26px; background: #e0e0e0; color: #111; font-family: "Noto Sans CJK SC", sans-serif; }
.plain1 { width: 23px; height: 20px; border-right: 1px solid #777; margin-bottom: 3px; line-height: 20px; }
.plus { margin: 0 0 6px 9px; } .plus svg { width: 13px; height: 13px; stroke: #ccc; stroke-width: 2; display: block; }
.forum { position: relative; margin-left: auto; height: 29px; width: 118px; display: flex; align-items: center; gap: 4px; justify-content: flex-end; padding-right: 11px; color: #fff; font-family: "Noto Sans CJK SC", sans-serif; font-size: 14px; }
.slant { position: absolute; inset: 0; width: 118px; height: 29px; } .chat { position: relative; width: 14px; height: 14px; } .forum span { position: relative; }

.status { height: 30px; background: #e6e6e6; display: flex; align-items: center; color: #0a7a18; white-space: nowrap; }
.brand { width: 117px; padding-left: 11px; font-size: 17px; line-height: 24px; font-family: "Liberation Sans", sans-serif; } .brand b { color: #1d5fa0; } .brand i { color: #f08030; font-weight: bold; }
.idx { display: flex; gap: 10px; align-items: center; font-family: "Noto Sans CJK SC", sans-serif; } .idx b { font: bold 15px "Liberation Mono", monospace; }
.ix1 { width: 233px; } .ix2 { width: 236px; } .dark { color: #333; width: 604px; } .dark .crb { margin-left: 4px; }
.tip { color: #00008b; font-family: "Noto Sans CJK SC", sans-serif; }
.right { margin-left: auto; display: flex; align-items: center; padding-right: 32px; color: #222; }
.fut, .ext { width: 60px; height: 21px; line-height: 19px; color: #fff; background: #cc2838; border: 1px solid #a01c28; margin-right: 3px; font-family: "Noto Sans CJK SC", sans-serif; } .ext { background: #707070; border-color: #555; }
.dd { width: 27px; padding-left: 4px; color: #d02020; } .meter, .signal { width: 21px; height: 19px; margin-right: 9px; }
.clk { font-size: 14px; }

.taskbar { height: 49px; background: linear-gradient(90deg, #24353d, #25333b 50%, #2c3234 88%, #1e2d36); display: flex; color: #fff; font-family: "Noto Sans CJK SC", sans-serif; }
.taskbar button { display: flex; align-items: center; white-space: pre; }
.taskbar .start { width: 79px; padding-left: 20px; } .start svg { width: 20px; height: 20px; }
.taskbar .wx { width: 52px; } .wx svg { width: 30px; height: 26px; }
.taskbar .task { width: 190px; margin-right: 11px; padding-left: 8px; gap: 4px; border-bottom: 2px solid #76b4e4; }
.task svg { width: 30px; height: 30px; flex: none; }
.taskbar .solo { width: 63px; padding-left: 10px; } .solo svg { width: 30px; height: 30px; } .taskbar .s2 { width: 56px; padding-left: 9px; }
.taskbar .active { width: 200px; background: #4e5c62; margin-right: 6px; padding-left: 13px; }
.tray { margin-left: auto; display: flex; align-items: center; gap: 9px; } .tray svg { width: 21px; height: 21px; }
.ime { width: 21px; margin-right: 6px; text-align: center; font: 20px "Noto Sans", sans-serif; }
time { width: 110px; padding: 3px 0 0 6px; display: flex; flex-direction: column; align-items: center; font: 16px/23px "Noto Sans", sans-serif; } .hm { font-size: 15px; line-height: 22px; }
</style>
